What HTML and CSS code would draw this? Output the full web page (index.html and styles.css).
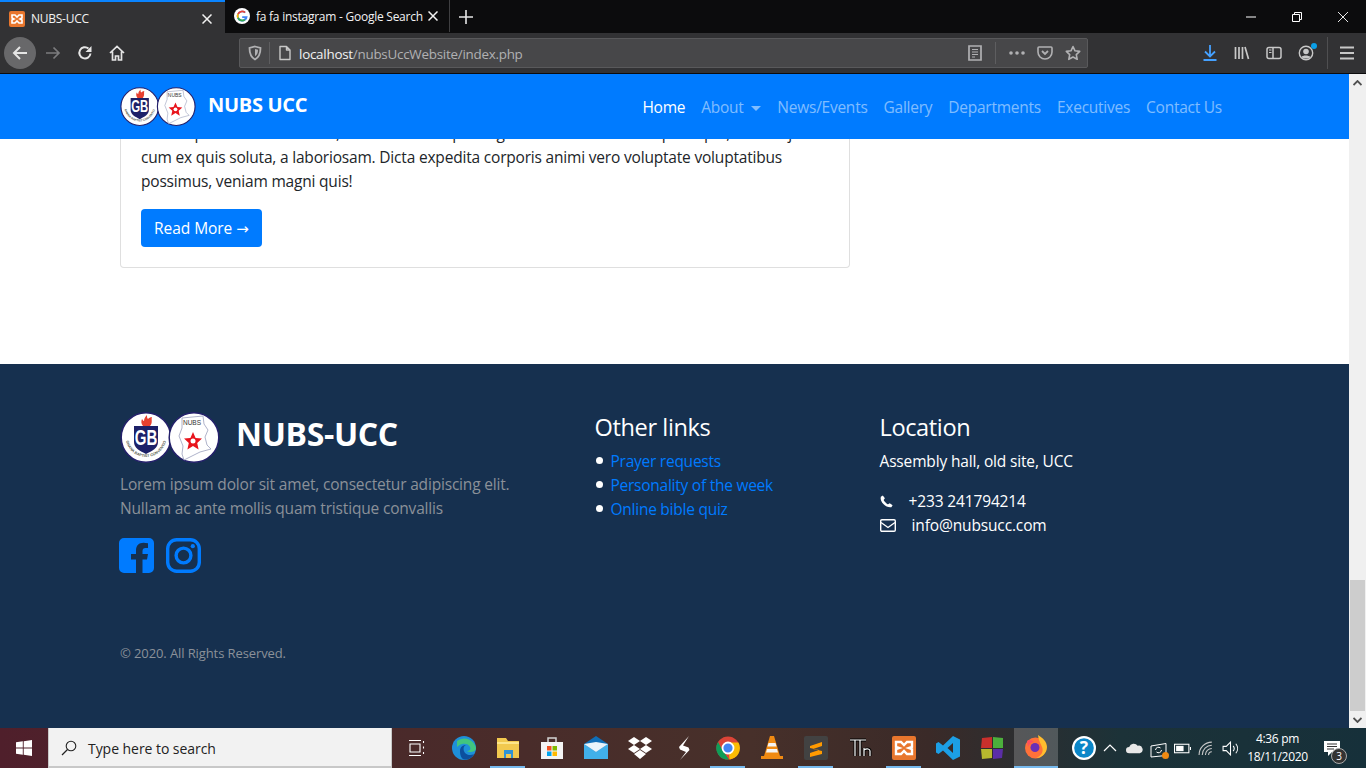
FILE: index.html
```html
<!DOCTYPE html>
<html lang="en">
<head>
<meta charset="utf-8">
<title>NUBS-UCC</title>
<link rel="stylesheet" href="styles.css">
</head>
<body>
<svg class="defs" width="0" height="0" aria-hidden="true">
  <defs>
    <symbol id="logo" viewBox="0 0 100 52">
      <circle cx="26" cy="25.500" r="24.800" fill="#fff" stroke="#24206b" stroke-width="1.500"/>
      <circle cx="74" cy="25.500" r="24.800" fill="#fff" stroke="#24206b" stroke-width="1.500"/>
      <path d="M23 14c-2-2-2-5-1-7 1 1 1 2 2 2 0-2 1-4 3-6 0 2 0 3 1 4 1-1 2-2 4-2-1 2 1 6-2 9z" fill="#e8402f"/>
      <path d="M14 14h24v16c0 6-6 9-12 12-6-3-12-6-12-12z" fill="#1d2168"/>
      <text class="logo-gb" transform="translate(26 33) scale(1 1.500)" text-anchor="middle">GB</text>
      <path id="logo-arc" d="M6 29a20.500 20.500 0 0 0 40 0" fill="none"/>
      <text class="logo-arc-text"><textPath href="#logo-arc">GHANA BAPTIST CONVENTION</textPath></text>
      <path d="M62 6L83 4l1 8 4 6-3 7 2 8 4 4-11 3-16 8-2-6 1-8-4-10 3-8z" fill="#fff" stroke="#9aa0bd" stroke-width=".8"/>
      <text class="logo-nubs" x="72" y="13" text-anchor="middle">NUBS</text>
      <path d="M73 20l2.600 6 6.400.5-4.800 4.500 1.400 6.500-5.600-3.500-5.600 3.500 1.400-6.500-4.800-4.500 6.400-.5z" fill="#e8141c"/>
      <circle cx="73" cy="29" r="2.500" fill="#fff"/>
    </symbol>
  </defs>
</svg>

<header class="browser">
  <div class="tabstrip">
    <div class="tab tab-active">
      <svg class="favicon" viewBox="0 0 16 16"><rect width="16" height="16" rx="2" fill="#e8762d"/><path d="M3 4h3l2 2 2-2h3v3l-2 1 2 1v3h-3l-2-2-2 2H3V9l2-1-2-1z" fill="none" stroke="#fff" stroke-width="1.600"/></svg>
      <span class="tab-title">NUBS-UCC</span>
      <svg class="tab-close" viewBox="0 0 10 10"><path d="M0.500 0.500l9 9M9.500 0.500l-9 9" stroke="#f2f2f2" stroke-width="1.500"/></svg>
    </div>
    <div class="tab tab-other">
      <svg class="favicon" viewBox="0 0 16 16"><circle cx="8" cy="8" r="8" fill="#fff"/><path d="M12.500 8.200H8.200v1.700h2.500c-.3 1.200-1.300 1.800-2.500 1.800a3.700 3.700 0 0 1 0-7.400c.9 0 1.700.3 2.300.9l1.200-1.200A5.400 5.400 0 1 0 13.600 8c0 .1-.6.200-1.100.2z" fill="#4285f4"/><path d="M3.300 5.600a5.400 5.400 0 0 1 8.400-1.700l-1.200 1.200a3.700 3.700 0 0 0-5.700 1.700z" fill="#ea4335"/><path d="M3.300 10.400a5.400 5.400 0 0 1 0-4.800l1.500 1.200a3.700 3.700 0 0 0 0 2.400z" fill="#fbbc05"/><path d="M3.300 10.400l1.500-1.200a3.700 3.700 0 0 0 5.300 1.900l1.400 1.200a5.400 5.400 0 0 1-8.200-1.900z" fill="#34a853"/></svg>
      <span class="tab-title">fa fa instagram - Google Search</span>
      <svg class="tab-close" viewBox="0 0 10 10"><path d="M0.500 0.500l9 9M9.500 0.500l-9 9" stroke="#f2f2f2" stroke-width="1.500"/></svg>
    </div>
    <svg class="new-tab" viewBox="0 0 14 14"><path d="M7 0v14M0 7h14" stroke="#e6e6e6" stroke-width="1.600"/></svg>
    <div class="window-controls">
      <svg class="win-btn" viewBox="0 0 10 10"><path d="M0 5h10" stroke="#fff"/></svg>
      <svg class="win-btn" viewBox="0 0 10 10"><path d="M.5 2.500h7v7h-7zM2.500 2.500v-2h7v7h-2" fill="none" stroke="#fff"/></svg>
      <svg class="win-btn" viewBox="0 0 10 10"><path d="M0 0l10 10M10 0L0 10" stroke="#fff" stroke-width=".9"/></svg>
    </div>
  </div>
  <div class="toolbar">
    <div class="nav-buttons">
      <span class="back-circle"><svg class="tb-icon" viewBox="0 0 16 16"><path d="M15 8H2M8 2L2 8l6 6" fill="none" stroke="#e5e5e5" stroke-width="2"/></svg></span>
      <svg class="tb-icon" viewBox="0 0 16 16"><path d="M1 8h13M8.500 2.500L14 8l-5.500 5.500" fill="none" stroke="#7c7c7e" stroke-width="1.700"/></svg>
      <svg class="tb-icon reload" viewBox="0 0 16 16"><path d="M13.500 8.500A5.600 5.600 0 1 1 11.500 3.500" fill="none" stroke="#e5e5e5" stroke-width="2"/><path d="M14.500 1v6h-6z" fill="#e5e5e5"/></svg>
      <svg class="tb-icon home" viewBox="0 0 16 16"><path d="M1 8l7-6.500L15 8M3.500 6.500V15h3v-4h3v4h3V6.500" fill="none" stroke="#e5e5e5" stroke-width="1.700"/></svg>
    </div>
    <div class="urlbar">
      <svg class="url-shield" viewBox="0 0 16 16"><path d="M8 1.500l5.500 1.500c0 5-1 9-5.500 11.500C3.500 12 2.500 8 2.500 3z" fill="none" stroke="#b1b1b3" stroke-width="1.800"/><path d="M8 4l3 .8c0 3-.7 5-3 6.500z" fill="#b1b1b3"/></svg>
      <span class="url-sep"></span>
      <svg class="url-page" viewBox="0 0 16 16"><path d="M3 1.500h6.500l3.500 3.500v9.500H3zM9.500 1.500V5H13" fill="none" stroke="#c8c8c8" stroke-width="1.400" stroke-linejoin="round"/></svg>
      <span class="url-text"><span class="url-host">localhost</span>/nubsUccWebsite/index.php</span>
      <svg class="url-icon reader" viewBox="0 0 16 16"><path d="M2 1h12v14H2z" fill="none" stroke="#b1b1b3" stroke-width="1.700"/><path d="M5 4.500h6M5 7h6M5 9.500h6M5 12h3" stroke="#b1b1b3" stroke-width="1.200"/></svg>
      <span class="url-sep url-sep-tall"></span>
      <svg class="url-icon dots" viewBox="0 0 16 4"><circle cx="2" cy="2" r="1.800" fill="#b1b1b3"/><circle cx="8" cy="2" r="1.800" fill="#b1b1b3"/><circle cx="14" cy="2" r="1.800" fill="#b1b1b3"/></svg>
      <svg class="url-icon" viewBox="0 0 16 16"><path d="M2 2h12a1 1 0 0 1 1 1v4a7 7 0 0 1-14 0V3a1 1 0 0 1 1-1z" fill="none" stroke="#b1b1b3" stroke-width="1.600"/><path d="M5 6l3 3 3-3" fill="none" stroke="#b1b1b3" stroke-width="1.800"/></svg>
      <svg class="url-icon" viewBox="0 0 16 16"><path d="M8 1.500l2 4.300 4.700.6-3.400 3.200.9 4.700L8 12l-4.200 2.300.9-4.700L1.300 6.400 6 5.800z" fill="none" stroke="#b1b1b3" stroke-width="1.600" stroke-linejoin="round"/></svg>
    </div>
    <div class="tools">
      <svg class="tool" viewBox="0 0 16 16"><path d="M8 0v11M3 6.500L8 11.500l5-5" fill="none" stroke="#45a1ff" stroke-width="1.800"/><path d="M1.500 15h13" stroke="#45a1ff" stroke-width="2"/></svg>
      <svg class="tool" viewBox="0 0 16 16"><path d="M1.500 2v12M5 2v12M8.500 2v12M11 2l3.500 12" fill="none" stroke="#c8c8c8" stroke-width="1.700"/></svg>
      <svg class="tool" viewBox="0 0 16 16"><rect x="1" y="2.500" width="14" height="11" rx="2" fill="none" stroke="#c8c8c8" stroke-width="1.500"/><path d="M7 3v10" stroke="#c8c8c8" stroke-width="1.500"/><path d="M3 5h2.500M3 7.500h2.500" stroke="#c8c8c8"/></svg>
      <span class="account">
        <svg class="tool" viewBox="0 0 16 16"><circle cx="8" cy="8" r="6.700" fill="none" stroke="#c8c8c8" stroke-width="1.400"/><circle cx="8" cy="6.500" r="2.800" fill="#c8c8c8"/><path d="M3.500 12c1-2 7-2 9 0-2 2-7 2-9 0z" fill="#c8c8c8"/></svg>
        <span class="account-dot"></span>
      </span>
      <span class="tools-sep"></span>
      <svg class="tool menu" viewBox="0 0 16 16"><path d="M1 2.500h14M1 8h14M1 13.500h14" stroke="#c8c8c8" stroke-width="1.800"/></svg>
    </div>
  </div>
</header>

<div class="viewport">
  <div class="page">
    <nav class="navbar">
      <a class="brand">
        <svg class="brand-logo"><use href="#logo"/></svg>
        <span class="brand-name">NUBS UCC</span>
      </a>
      <ul class="nav-links">
        <li class="nav-active">Home</li>
        <li>About <span class="caret"></span></li>
        <li>News/Events</li>
        <li>Gallery</li>
        <li>Departments</li>
        <li>Executives</li>
        <li>Contact Us</li>
      </ul>
    </nav>
    <main class="content">
      <article class="card">
        <p class="card-text">Lorem ipsum dolor sit amet, consectetur adipisicing elit. Ratione illum tempore quo, nam ut jure dolor<br>cum ex quis soluta, a laboriosam. Dicta expedita corporis animi vero voluptate voluptatibus<br>possimus, veniam magni quis!</p>
        <a class="read-more">Read More <span class="arrow">→</span></a>
      </article>
    </main>
    <footer class="footer">
      <div class="footer-cols">
        <section class="col-about">
          <div class="footer-brand">
            <svg class="footer-logo"><use href="#logo"/></svg>
            <span class="footer-name">NUBS-UCC</span>
          </div>
          <p class="footer-lorem">Lorem ipsum dolor sit amet, consectetur adipiscing elit.<br>Nullam ac ante mollis quam tristique convallis</p>
          <div class="socials">
            <svg class="social" viewBox="0 0 35 35"><path d="M5 0h25a5 5 0 0 1 5 5v25a5 5 0 0 1-5 5h-6.500V21.500h4.500l1-5.500h-5.500v-3c0-2 1-3 3-3h2.500V5.200c-1.500-.2-3-.4-4.500-.4-4.500 0-7.500 2.700-7.500 7.700V16h-5v5.500h5V35H5a5 5 0 0 1-5-5V5a5 5 0 0 1 5-5z" fill="#007bff"/></svg>
            <svg class="social" viewBox="0 0 35 35"><rect x="1.700" y="1.700" width="31.600" height="31.600" rx="9" fill="none" stroke="#007bff" stroke-width="3.400"/><circle cx="17.500" cy="17.500" r="7.400" fill="none" stroke="#007bff" stroke-width="3.400"/><circle cx="26.800" cy="8.200" r="2.100" fill="#007bff"/></svg>
          </div>
        </section>
        <section class="col-links">
          <h2 class="footer-heading">Other links</h2>
          <ul class="link-list">
            <li>Prayer requests</li>
            <li>Personality of the week</li>
            <li>Online bible quiz</li>
          </ul>
        </section>
        <section class="col-location">
          <h2 class="footer-heading">Location</h2>
          <p class="address">Assembly hall, old site, UCC</p>
          <div class="contact contact-phone">
            <svg class="contact-icon" viewBox="0 0 16 16"><path d="M3.500 0.500L1 2c-1 3 1 7 3.500 9.500S11 15.800 14 15l1.500-2.500-3.500-2.500-2 1.500C8.500 11 5 7.500 4.500 6l1.500-2z" fill="#fff"/></svg>
            <span>+233 241794214</span>
          </div>
          <div class="contact contact-mail">
            <svg class="contact-icon mail-icon" viewBox="0 0 16 13"><rect x=".7" y=".7" width="14.600" height="11.600" rx="1.200" fill="none" stroke="#fff" stroke-width="1.400"/><path d="M1 3.500l7 5 7-5" fill="none" stroke="#fff" stroke-width="1.400"/></svg>
            <span>info@nubsucc.com</span>
          </div>
        </section>
      </div>
      <p class="copyright">© 2020. All Rights Reserved.</p>
    </footer>
  </div>
  <div class="scrollbar">
    <svg class="scroll-arrow" viewBox="0 0 9 6"><path d="M.5 5L4.500 1l4 4" fill="none" stroke="#505050" stroke-width="1.800"/></svg>
    <span class="scroll-thumb"></span>
    <svg class="scroll-arrow" viewBox="0 0 9 6"><path d="M.5 1l4 4 4-4" fill="none" stroke="#505050" stroke-width="1.800"/></svg>
  </div>
</div>

<div class="taskbar">
  <svg class="start" viewBox="0 0 16 16"><path d="M0 2.300l6.800-1v6.300H0zM7.700 1.200L16 0v7.600H7.700zM0 8.400h6.800v6.300l-6.800-1zM7.700 8.400H16V16l-8.300-1.200z" fill="#fff"/></svg>
  <div class="search">
    <svg class="search-icon" viewBox="0 0 16 16"><circle cx="10" cy="6" r="4.800" fill="none" stroke="#222" stroke-width="1.100"/><path d="M6.500 9.500L1 15" stroke="#222" stroke-width="1.300"/></svg>
    <span>Type here to search</span>
  </div>
  <div class="tb-apps">
    <span class="app task-view"><svg class="app-icon" viewBox="0 0 16 16"><path d="M0 .5h12M0 15.500h12M1 4h10v8H1zM14.500 1v2M14.500 6.500v2M14.500 12v2" fill="none" stroke="#fff" stroke-width="1.100"/></svg></span>
    <span class="app"><svg class="app-icon lg" viewBox="0 0 24 24"><circle cx="12" cy="12" r="12" fill="#1e8fd8"/><path d="M5 5a12 12 0 0 1 19 7c0 3-3 4-6 4-2 0-3-1-3-1 3 0 4-2 3-4-1-3-5-4-8-3-2 .6-4 2-5 3z" fill="#41c57f"/><path d="M8 15c0-4 3-6 6-6-3 1-3 5-1 8 2 2 6 3 9 1-2 4-6 6-10 5.500-3-1-4-5-4-8.500z" fill="#0c4f9e"/></svg></span>
    <span class="app on"><svg class="app-icon lg" viewBox="0 0 24 24"><path d="M1 2h9l2 3h11v17H1z" fill="#f2c94f"/><path d="M1 6h22v2H1z" fill="#fde58a"/><path d="M8 14h9v8h-2v-4h-5v4H8z" fill="#2f93d6"/></svg></span>
    <span class="app"><svg class="app-icon lg" viewBox="0 0 24 24"><path d="M1 6h22v17H1z" fill="#f4f4f4"/><path d="M8 6V2h8v4" fill="none" stroke="#d4d4d4" stroke-width="1.500"/><rect x="7" y="10" width="4.500" height="4.500" fill="#f25022"/><rect x="12.500" y="10" width="4.500" height="4.500" fill="#7fba00"/><rect x="7" y="15.500" width="4.500" height="4.500" fill="#00a4ef"/><rect x="12.500" y="15.500" width="4.500" height="4.500" fill="#ffb900"/></svg></span>
    <span class="app"><svg class="app-icon lg" viewBox="0 0 24 24"><path d="M0 8l12-8 12 8v15H0z" fill="#0f6fb8"/><path d="M0 8l12 8 12-8v15H0z" fill="#41b0ea"/><path d="M0 8l12 8 12-8-12-2z" fill="#e8f4fb"/></svg></span>
    <span class="app"><svg class="app-icon lg" viewBox="0 0 24 22"><path d="M6 0l6 4-6 4-6-4zM18 0l6 4-6 4-6-4zM6 8l6 4-6 4-6-4zM18 8l6 4-6 4-6-4zM12 13l6 4-6 5-6-5z" fill="#fff"/></svg></span>
    <span class="app"><svg class="app-icon lg" viewBox="0 0 24 24"><path d="M17 0L7 11l1 2.500 6 2.500-6 8 9.500-10-1-2.500L11 9.500z" fill="#fff"/></svg></span>
    <span class="app on"><svg class="app-icon lg" viewBox="0 0 24 24"><circle cx="12" cy="12" r="11.500" fill="#db4437"/><path d="M12 6.500h10.500a11.500 11.500 0 0 1-9 17z" fill="#fbbc05"/><path d="M2 6l5 9 6 8.500A11.500 11.500 0 0 1 2 6z" fill="#0f9d58"/><circle cx="12" cy="12" r="5.500" fill="#4285f4" stroke="#fff" stroke-width="1.800"/></svg></span>
    <span class="app"><svg class="app-icon lg" viewBox="0 0 24 24"><path d="M10 0h4l6 20H4z" fill="#f08a12"/><path d="M8.500 7h7l1 3.500h-9zM7 13h10l1 3.500H6z" fill="#f4f4f4"/><path d="M1 20h22v3H1z" fill="#f08a12"/></svg></span>
    <span class="app on"><svg class="app-icon lg" viewBox="0 0 24 24"><rect width="24" height="24" rx="2" fill="#424242"/><path d="M6 10l12-4v4L9 13l9 2v3L6 21v-4l9-3-9-2z" fill="#ff9a00"/></svg></span>
    <span class="app"><svg class="app-icon lg" viewBox="0 0 24 24"><path d="M2 4h16M7 4v16M12 4v16M16 12v8M16 14c3-2 6-1 6 1v5" fill="none" stroke="#000" stroke-width="3"/><path d="M2 4h16M7 4v16M12 4v16M16 12v8M16 14c3-2 6-1 6 1v5" fill="none" stroke="#fff" stroke-width="1.200"/></svg></span>
    <span class="app on"><svg class="app-icon lg" viewBox="0 0 24 24"><rect width="24" height="24" rx="2" fill="#e8762d"/><path d="M4 6h5l3 3 3-3h5v5l-3 1 3 1v5h-5l-3-3-3 3H4v-5l3-1-3-1z" fill="none" stroke="#fff" stroke-width="2.400"/></svg></span>
    <span class="app"><svg class="app-icon lg" viewBox="0 0 24 24"><path d="M17 0l7 3.500v17L17 24 7 14.500 2.500 18 0 16.500V7.500L2.500 6 7 9.500zM17 7l-5.500 5 5.500 5z" fill="#1c9fe6"/></svg></span>
    <span class="app"><svg class="app-icon lg" viewBox="0 0 24 24"><path d="M2 2l10-1v11H1z" fill="#c9302c"/><path d="M13 1l10 1v10H13z" fill="#4caf3c"/><path d="M1 13h11v9L2 23z" fill="#b7b82e"/><path d="M13 13h10l-1 9-9 1z" fill="#5b2ea6"/></svg></span>
    <span class="app firefox"><svg class="app-icon lg" viewBox="0 0 24 24"><circle cx="11.500" cy="13" r="10.500" fill="#ff7139"/><path d="M14 0c5 3 9 7 9 12 0 6-5 11-11 11 5-2 8-6 6-11-1-3-3-5-4-12z" fill="#ffbd2e"/><circle cx="11" cy="12.500" r="4.500" fill="#6b2fb5"/><path d="M3 6c2-2 5-1 7 1-3 0-5 2-6 5z" fill="#ff4f5e"/></svg></span>
  </div>
  <div class="tray">
    <svg class="help" viewBox="0 0 22 22"><circle cx="11" cy="11" r="10" fill="#0b86c8" stroke="#fff" stroke-width="2"/><text class="help-mark" x="11" y="16.500" text-anchor="middle">?</text></svg>
    <svg class="tray-icon chevron" viewBox="0 0 14 8"><path d="M1 7l6-6 6 6" fill="none" stroke="#fff" stroke-width="1.200"/></svg>
    <svg class="tray-icon wide" viewBox="0 0 16 9"><path d="M3 9a3 3 0 0 1 0-6 4.500 4.500 0 0 1 8-1 3.500 3.500 0 0 1 2 7z" fill="#e8e8e8"/></svg>
    <span class="update"><svg class="tray-icon wide" viewBox="0 0 16 15"><path d="M.5 3L15.500.5v12L.5 14z" fill="none" stroke="#fff"/><path d="M5 7a3 3 0 0 1 5-2M11 7a3 3 0 0 1-5 2" fill="none" stroke="#fff"/></svg><span class="update-dot"></span></span>
    <svg class="tray-icon wide" viewBox="0 0 16 9"><rect x=".5" y=".5" width="13.500" height="8" fill="none" stroke="#fff"/><rect x="2" y="2" width="7" height="5" fill="#fff"/><path d="M15 3h1v3h-1z" fill="#fff"/></svg>
    <svg class="tray-icon wide" viewBox="0 0 16 14"><path d="M1 13A12 12 0 0 1 13 1M4 13a9 9 0 0 1 9-9M7 13a6 6 0 0 1 6-6M10 13a3 3 0 0 1 3-3" fill="none" stroke="#c9c9c9" stroke-width="1"/></svg>
    <svg class="tray-icon wide" viewBox="0 0 16 14"><path d="M1 5h3l4-4v12L4 9H1zM10.500 4.500a4 4 0 0 1 0 5M13 2.500a7 7 0 0 1 0 9" fill="none" stroke="#fff"/></svg>
  </div>
  <div class="clock"><span>4:36 pm</span><span>18/11/2020</span></div>
  <div class="notify">
    <svg class="notify-icon" viewBox="0 0 16 15"><path d="M0 0h16v11H8l-4 4v-4H0z" fill="#fff"/><path d="M3 3h10M3 5.500h10M3 8h7" stroke="#333"/></svg>
    <span class="notify-badge">3</span>
  </div>
</div>
</body>
</html>
```
FILE: styles.css
```css
* { box-sizing: border-box; }
html, body { margin: 0; height: 768px; overflow: hidden; }
body { font-family: "Open Sans", "Noto Sans", sans-serif; background: #16304f; display: flex; flex-direction: column; width: 1366px; }
.defs { display: block; height: 0; }
p, h2, ul { margin: 0; padding: 0; }
ul { list-style: none; }

/* Logo text */
.logo-gb { font-family: "Liberation Sans", sans-serif; font-size: 15px; font-weight: 700; fill: #fff; }
.logo-arc-text { font-family: "Liberation Sans", sans-serif; font-size: 3.800px; font-weight: 700; fill: #55594a; }
.logo-nubs { font-family: "Liberation Sans", sans-serif; font-size: 6.500px; fill: #333; }

/* Browser chrome */
.browser { height: 74px; flex: none; background: #0c0c0d; border-bottom: 1px solid #0c0c0d; }
.tabstrip { height: 33px; display: flex; align-items: stretch; font-size: 12px; color: #f2f2f2; }
.tab { display: flex; align-items: center; letter-spacing: -0.25px; }
.tab-active { width: 225px; padding: 2px 13px 0 9px; background: #323234; border-top: 2px solid #0a84ff; }
.tab-other { width: 225px; padding: 0 11px 0 9px; border-right: 1px solid #3f3f41; height: 32px; }
.favicon { width: 16px; height: 16px; flex: none; margin-right: 6px; }
.tab-title { flex: 1; white-space: nowrap; overflow: hidden; }
.tab-close { width: 10px; height: 10px; flex: none; }
.new-tab { width: 14px; height: 14px; align-self: center; margin-left: 9px; }
.window-controls { margin-left: auto; display: flex; align-items: center; gap: 36px; padding-right: 18px; }
.win-btn { width: 10px; height: 10px; }
.toolbar { height: 40px; background: #323234; display: flex; align-items: center; }
.nav-buttons { width: 239px; display: flex; align-items: center; padding-left: 4px; flex: none; }
.back-circle { width: 32px; height: 32px; border-radius: 50%; background: #68686a; display: flex; align-items: center; justify-content: center; margin-right: 9px; }
.tb-icon { width: 16px; height: 16px; }
.reload { margin-left: 16px; }
.home { margin-left: 16px; }
.urlbar { width: 849px; height: 30px; background: #474749; border: 1px solid #59595b; border-radius: 2px; display: flex; align-items: center; padding: 0 6px 0 7px; }
.url-shield { width: 16px; height: 16px; flex: none; }
.url-sep { width: 1px; height: 22px; background: #5e5e60; margin: 0 7px 0 6px; flex: none; }
.url-page { width: 16px; height: 16px; flex: none; margin-right: 6px; }
.url-text { flex: 1; font-size: 13.400px; color: #b1b1b3; letter-spacing: -0.25px; padding-top: 2px; }
.url-host { color: #f2f2f2; }
.url-icon { width: 16px; height: 16px; flex: none; margin-left: 12px; }
.reader { margin-right: 3px; }
.url-sep-tall { margin: 0 3px 0 9px; }
.dots { height: 4px; margin-left: 10px; }
.tools { flex: 1; display: flex; align-items: center; padding-left: 114px; }
.tool { width: 16px; height: 16px; flex: none; margin-right: 16px; display: block; }
.account { position: relative; display: block; }
.account-dot { position: absolute; width: 6px; height: 6px; border-radius: 50%; background: #0a9fe8; top: -2px; left: 13px; }
.tools-sep { width: 1px; height: 32px; background: #4f4f51; margin: 0 11px 0 -3px; }
.menu { margin-right: 0; }

/* Viewport */
.viewport { height: 654px; flex: none; display: flex; overflow: hidden; }
.page { width: 1349px; flex: none; background: #fff; display: flex; flex-direction: column; }
.navbar { height: 65px; flex: none; background: #007bff; display: flex; align-items: center; padding: 0 120px; position: relative; z-index: 1; }
.brand { display: flex; align-items: center; gap: 12px; }
.brand-logo { width: 76px; height: 40px; display: block; }
.brand-name { font-size: 20px; font-weight: 700; color: #fff; letter-spacing: -0.3px; margin-top: -5px; }
.nav-links { display: flex; margin-left: auto; font-size: 15.500px; letter-spacing: -0.25px; color: rgba(255,255,255,.5); padding-top: 1px; margin-right: 7px; gap: 16px; }
.nav-active { color: #fff; }
.caret { display: inline-block; border: 5px solid transparent; border-top-color: currentColor; border-bottom: 0; vertical-align: middle; margin-left: 4px; }

.content { height: 225px; flex: none; padding-left: 120px; }
.card { width: 730px; height: 129px; padding: 6px 20px 0; background: #fff; border: 1px solid #dfdfdf; border-top: 0; border-radius: 0 0 4px 4px; }
.card-text { font-size: 15.500px; line-height: 24px; letter-spacing: -0.19px; color: #212529; margin-top: -24px; white-space: nowrap; height: 72px; }
.read-more { display: inline-block; margin-top: 16px; height: 38px; padding: 0 13px; background: #007bff; color: #fff; border-radius: 4px; font-size: 15.500px; line-height: 38px; letter-spacing: -0.05px; }
.arrow { font-family: "DejaVu Sans", sans-serif; font-size: 15px; }

.footer { flex: 1; background: #16304f; padding: 48px 120px 0; }
.footer-cols { display: flex; height: 216px; }
.col-about { width: 474.500px; flex: none; }
.col-links { width: 285px; flex: none; }
.footer-brand { display: flex; align-items: center; gap: 16px; height: 52px; }
.footer-logo { width: 100px; height: 52px; display: block; }
.footer-name { font-size: 32px; font-weight: 700; color: #fff; letter-spacing: -0.35px; margin-bottom: 10px; }
.footer-lorem { margin-top: 8px; font-size: 15.500px; line-height: 24px; letter-spacing: -0.18px; color: #8b9199; white-space: nowrap; }
.socials { display: flex; gap: 12px; margin-top: 18px; margin-left: -1px; }
.social { width: 35px; height: 35px; display: block; }
.footer-heading { font-size: 23.600px; font-weight: 400; color: #fff; line-height: 29px; letter-spacing: -0.4px; padding-top: 1px; height: 30px; margin-bottom: 7px; }
.link-list { font-size: 15.500px; line-height: 24px; letter-spacing: -0.25px; color: #007bff; }
.link-list li { padding-left: 16px; position: relative; }
.link-list li::before { content: ""; position: absolute; left: 1px; top: 8px; width: 7px; height: 7px; border-radius: 50%; background: #fff; }
.address { font-size: 15.500px; line-height: 24px; letter-spacing: -0.16px; color: #fff; margin-bottom: 16px; }
.contact { display: flex; align-items: center; height: 24px; font-size: 15.500px; letter-spacing: -0.14px; color: #fff; }
.contact-icon { width: 13px; height: 13px; margin-right: 16px; flex: none; }
.mail-icon { width: 16px; margin-right: 16px; }
.copyright { margin-top: 16px; font-size: 13px; letter-spacing: -0.1px; color: #8b9199; }

.scrollbar { flex: 1; background: #f0f0f0; display: flex; flex-direction: column; align-items: center; padding: 6px 0 5px; }
.scroll-arrow { width: 9px; height: 6px; flex: none; }
.scroll-thumb { width: 15px; height: 131px; background: #cdcdcd; margin-top: auto; margin-bottom: 6px; flex: none; }

/* Taskbar */
.taskbar { height: 40px; flex: 1; display: flex; align-items: center; background: linear-gradient(90deg, #4f1f2b 0, #4a2a2a 30%, #47302a 55%, #3a2a28 68%, #1c3238 82%, #16303a 100%); color: #fff; }
.start { width: 16px; height: 16px; margin: 0 16px; flex: none; }
.search { width: 344px; height: 40px; background: #f2f2f2; border: 1px solid #c8c8c8; border-bottom-width: 2px; border-top: 0; display: flex; align-items: center; color: #222; font-size: 14px; letter-spacing: -0.05px; padding-left: 12px; padding-top: 2px; flex: none; }
.search-icon { width: 16px; height: 16px; margin-right: 11px; }
.tb-apps { display: flex; margin-left: 3px; flex: none; }
.app { width: 44px; height: 40px; display: flex; align-items: center; justify-content: center; flex: none; position: relative; }
.task-view { margin-right: 3px; }
.app.on::after { content: ""; position: absolute; left: 4px; right: 5px; bottom: 0; height: 2px; background: #76b9ed; }
.app-icon { width: 16px; height: 16px; }
.app-icon.lg { width: 24px; height: 24px; }
.firefox { background: rgba(255,255,255,.2); border-bottom: 2px solid #76b9ed; }
.tray { display: flex; align-items: center; gap: 7px; margin-left: 14px; flex: none; }
.help { width: 24px; height: 24px; }
.help-mark { font-size: 16px; font-weight: 700; fill: #fff; }
.tray-icon { width: 14px; height: 8px; }
.chevron { margin-right: 2px; }
.tray-icon.wide { width: 17px; height: 15px; }
.update { position: relative; display: block; height: 15px; }
.update-dot { position: absolute; width: 7px; height: 7px; border-radius: 50%; background: #f08a12; right: -2px; bottom: -3px; }
.clock { width: 73px; margin-left: 2px; display: flex; flex-direction: column; align-items: center; font-size: 12px; line-height: 18px; letter-spacing: -0.3px; flex: none; }
.notify { position: relative; margin-left: 10px; flex: none; }
.notify-icon { width: 16px; height: 15px; display: block; }
.notify-badge { position: absolute; left: 7px; top: 7px; width: 16px; height: 16px; border-radius: 50%; background: #333; border: 1px solid #aaa; font-size: 10px; line-height: 14px; text-align: center; }
```
